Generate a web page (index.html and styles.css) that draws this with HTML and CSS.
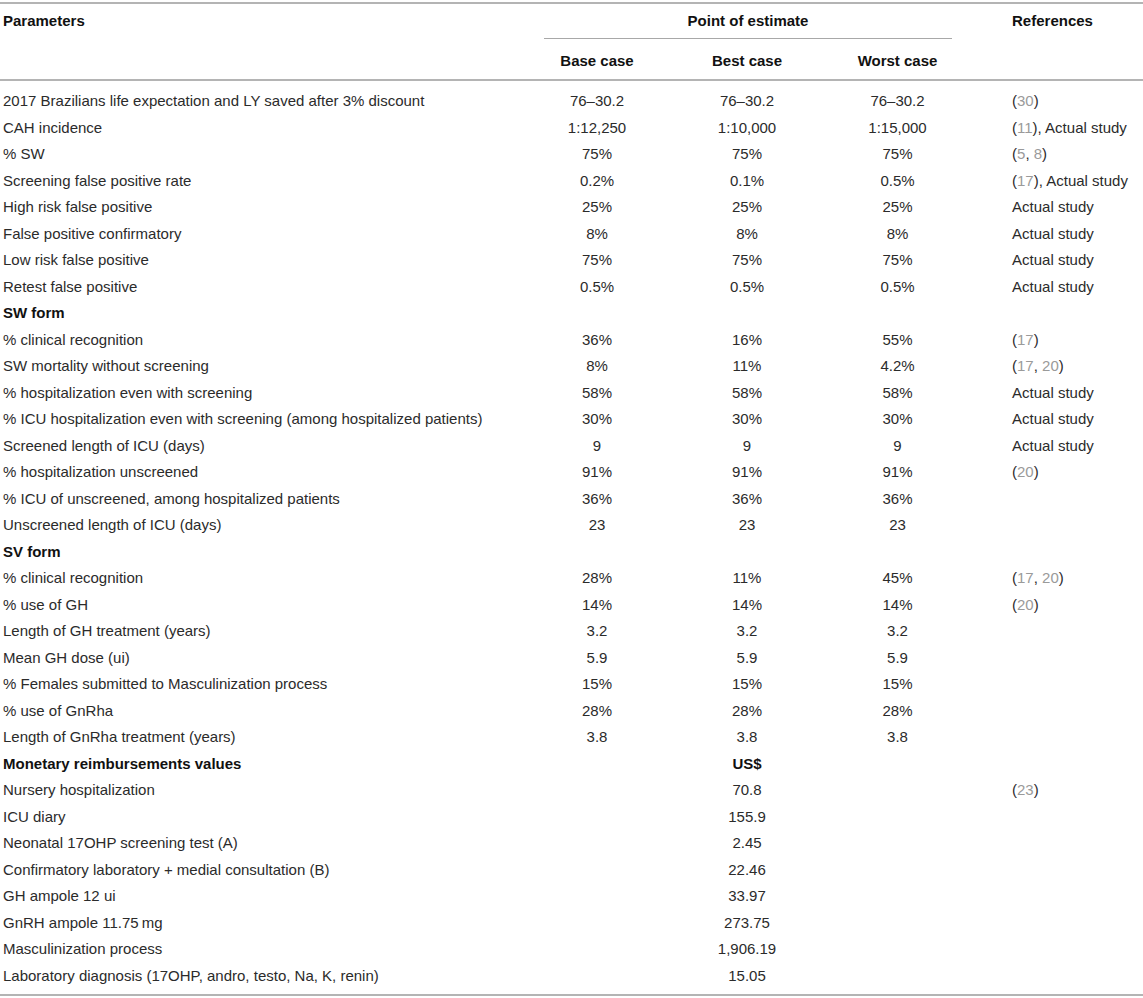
FILE: index.html
```html
<!DOCTYPE html>
<html lang="en">

<head>
  <meta charset="UTF-8">
  <meta name="viewport" content="width=device-width, initial-scale=1.0">
  <title>Model parameters</title>
  <link rel="stylesheet" href="styles.css">
</head>

<body>
  <table class="params">
    <colgroup>
      <col class="col-name">
      <col class="col-val">
      <col class="col-val">
      <col class="col-val-last">
      <col class="col-ref">
    </colgroup>
    <thead>
      <tr>
        <th class="name" rowspan="2">Parameters</th>
        <th class="group" colspan="3"><div class="group-title">Point of estimate</div></th>
        <th class="ref" rowspan="2">References</th>
      </tr>
      <tr class="sub">
        <th>Base case</th>
        <th>Best case</th>
        <th>Worst case</th>
      </tr>
    </thead>
    <tbody>
      <tr>
        <td>2017 Brazilians life expectation and LY saved after 3% discount</td>
        <td>76–30.2</td><td>76–30.2</td><td>76–30.2</td>
        <td class="ref">(<a>30</a>)</td>
      </tr>
      <tr>
        <td>CAH incidence</td>
        <td>1:12,250</td><td>1:10,000</td><td>1:15,000</td>
        <td class="ref">(<a>11</a>), Actual study</td>
      </tr>
      <tr>
        <td>% SW</td>
        <td>75%</td><td>75%</td><td>75%</td>
        <td class="ref">(<a>5</a>, <a>8</a>)</td>
      </tr>
      <tr>
        <td>Screening false positive rate</td>
        <td>0.2%</td><td>0.1%</td><td>0.5%</td>
        <td class="ref">(<a>17</a>), Actual study</td>
      </tr>
      <tr>
        <td>High risk false positive</td>
        <td>25%</td><td>25%</td><td>25%</td>
        <td class="ref">Actual study</td>
      </tr>
      <tr>
        <td>False positive confirmatory</td>
        <td>8%</td><td>8%</td><td>8%</td>
        <td class="ref">Actual study</td>
      </tr>
      <tr>
        <td>Low risk false positive</td>
        <td>75%</td><td>75%</td><td>75%</td>
        <td class="ref">Actual study</td>
      </tr>
      <tr>
        <td>Retest false positive</td>
        <td>0.5%</td><td>0.5%</td><td>0.5%</td>
        <td class="ref">Actual study</td>
      </tr>

      <tr class="section">
        <td>SW form</td><td></td><td></td><td></td><td></td>
      </tr>
      <tr>
        <td>% clinical recognition</td>
        <td>36%</td><td>16%</td><td>55%</td>
        <td class="ref">(<a>17</a>)</td>
      </tr>
      <tr>
        <td>SW mortality without screening</td>
        <td>8%</td><td>11%</td><td>4.2%</td>
        <td class="ref">(<a>17</a>, <a>20</a>)</td>
      </tr>
      <tr>
        <td>% hospitalization even with screening</td>
        <td>58%</td><td>58%</td><td>58%</td>
        <td class="ref">Actual study</td>
      </tr>
      <tr>
        <td>% ICU hospitalization even with screening (among hospitalized patients)</td>
        <td>30%</td><td>30%</td><td>30%</td>
        <td class="ref">Actual study</td>
      </tr>
      <tr>
        <td>Screened length of ICU (days)</td>
        <td>9</td><td>9</td><td>9</td>
        <td class="ref">Actual study</td>
      </tr>
      <tr>
        <td>% hospitalization unscreened</td>
        <td>91%</td><td>91%</td><td>91%</td>
        <td class="ref">(<a>20</a>)</td>
      </tr>
      <tr>
        <td>% ICU of unscreened, among hospitalized patients</td>
        <td>36%</td><td>36%</td><td>36%</td>
        <td class="ref"></td>
      </tr>
      <tr>
        <td>Unscreened length of ICU (days)</td>
        <td>23</td><td>23</td><td>23</td>
        <td class="ref"></td>
      </tr>

      <tr class="section">
        <td>SV form</td><td></td><td></td><td></td><td></td>
      </tr>
      <tr>
        <td>% clinical recognition</td>
        <td>28%</td><td>11%</td><td>45%</td>
        <td class="ref">(<a>17</a>, <a>20</a>)</td>
      </tr>
      <tr>
        <td>% use of GH</td>
        <td>14%</td><td>14%</td><td>14%</td>
        <td class="ref">(<a>20</a>)</td>
      </tr>
      <tr>
        <td>Length of GH treatment (years)</td>
        <td>3.2</td><td>3.2</td><td>3.2</td>
        <td class="ref"></td>
      </tr>
      <tr>
        <td>Mean GH dose (ui)</td>
        <td>5.9</td><td>5.9</td><td>5.9</td>
        <td class="ref"></td>
      </tr>
      <tr>
        <td>% Females submitted to Masculinization process</td>
        <td>15%</td><td>15%</td><td>15%</td>
        <td class="ref"></td>
      </tr>
      <tr>
        <td>% use of GnRha</td>
        <td>28%</td><td>28%</td><td>28%</td>
        <td class="ref"></td>
      </tr>
      <tr>
        <td>Length of GnRha treatment (years)</td>
        <td>3.8</td><td>3.8</td><td>3.8</td>
        <td class="ref"></td>
      </tr>

      <tr class="section">
        <td>Monetary reimbursements values</td><td></td><td>US$</td><td></td><td></td>
      </tr>
      <tr>
        <td>Nursery hospitalization</td>
        <td></td><td>70.8</td><td></td>
        <td class="ref">(<a>23</a>)</td>
      </tr>
      <tr>
        <td>ICU diary</td>
        <td></td><td>155.9</td><td></td>
        <td class="ref"></td>
      </tr>
      <tr>
        <td>Neonatal 17OHP screening test (A)</td>
        <td></td><td>2.45</td><td></td>
        <td class="ref"></td>
      </tr>
      <tr>
        <td>Confirmatory laboratory + medial consultation (B)</td>
        <td></td><td>22.46</td><td></td>
        <td class="ref"></td>
      </tr>
      <tr>
        <td>GH ampole 12 ui</td>
        <td></td><td>33.97</td><td></td>
        <td class="ref"></td>
      </tr>
      <tr>
        <td>GnRH ampole 11.75&thinsp;mg</td>
        <td></td><td>273.75</td><td></td>
        <td class="ref"></td>
      </tr>
      <tr>
        <td>Masculinization process</td>
        <td></td><td>1,906.19</td><td></td>
        <td class="ref"></td>
      </tr>
      <tr>
        <td>Laboratory diagnosis (17OHP, andro, testo, Na, K, renin)</td>
        <td></td><td>15.05</td><td></td>
        <td class="ref"></td>
      </tr>
    </tbody>
  </table>
</body>

</html>
```

FILE: styles.css
```css
body {
  margin: 0;
  background: #fff;
  font-family: "Liberation Sans", Arial, Helvetica, sans-serif;
  font-size: 15px;
  color: #2b2b2b;
}

.params {
  --rule: #b4b4b4;
  width: 1143px;
  margin-top: 2px;
  table-layout: fixed;
  border-collapse: collapse;
}

.col-name { width: 522px; }
.col-val { width: 150px; }
.col-val-last { width: 151px; }
.col-ref { width: 170px; }

/* header block */
.params thead tr:first-child th {
  border-top: 2px solid var(--rule);
}

.params th {
  font-weight: bold;
  color: #111;
  line-height: 16px;
  padding: 9px 0;
  text-align: center;
  vertical-align: top;
}

.params th.name {
  text-align: left;
  padding-left: 3px;
  border-bottom: 2px solid var(--rule);
}

.params th.ref {
  text-align: left;
  padding-left: 39px;
  border-bottom: 2px solid var(--rule);
}

/* the short rule under "Point of estimate" */
.params th.group {
  padding: 9px 21px 0 22px;
}

.group-title {
  padding-bottom: 9px;
  border-bottom: 1px solid #a8a8a8;
}

.params tr.sub th {
  padding: 14px 0 10px;
  border-bottom: 2px solid var(--rule);
}

/* body rows */
.params td {
  height: 26.5px;
  padding: 0;
  line-height: 16px;
  text-align: center;
  vertical-align: middle;
  white-space: nowrap;
}

.params td:first-child {
  text-align: left;
  padding-left: 3px;
}

.params td.ref {
  text-align: left;
  padding-left: 39px;
}

.params td a {
  color: #9a9a9a;
}

.params tr.section td {
  font-weight: bold;
  color: #111;
}

.params tbody tr:first-child td {
  padding-top: 7px;
}

.params tbody tr:last-child td {
  padding-bottom: 5px;
  border-bottom: 2px solid var(--rule);
}
```
